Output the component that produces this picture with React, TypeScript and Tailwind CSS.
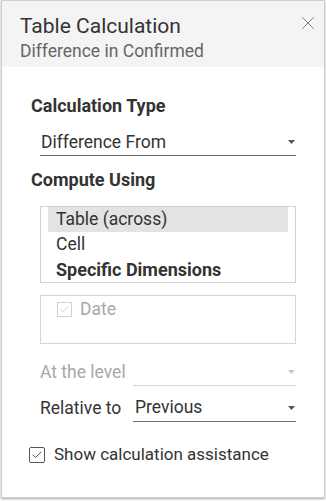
import { Check, X } from 'lucide-react';

function Caret({ light }: { light?: boolean }) {
  return (
    <svg width="7" height="4" viewBox="0 0 7 4" className={light ? 'fill-[#c8c8c8]' : 'fill-[#555]'}>
      <path d="M0 0h7L3.5 4z" />
    </svg>
  );
}

function Dropdown({ value, light, className }: { value: string; light?: boolean; className?: string }) {
  return (
    <div className={`flex items-center justify-between border-b ${light ? 'border-[#d6d6d6]' : 'border-[#6f6f6f]'} ${className ?? ''}`}>
      <span className="text-[#333]">{value}</span>
      <span className="pr-[1px]">
        <Caret light={light} />
      </span>
    </div>
  );
}

export default function App() {
  return (
    <div className="w-[326px] h-[501px] bg-white overflow-hidden" style={{ fontFamily: 'Roboto, "Liberation Sans", sans-serif' }}>
      <div className="h-[498px] mx-[1px] border border-[#cfcfcf] bg-white shadow-[0_1px_2px_rgba(0,0,0,0.35)] flex flex-col">
        {/* header */}
        <div className="h-[66px] bg-[#f4f4f4] flex justify-between pl-[18px] pr-[5px]">
          <div className="pt-[11px]">
            <h1 className="text-[21px] leading-[28px] text-[#333]">Table Calculation</h1>
            <p className="text-[17.5px] leading-[22px] text-[#666]">Difference in Confirmed</p>
          </div>
          <button className="h-fit pt-[11px] text-[#777]">
            <X size={22} strokeWidth={1} />
          </button>
        </div>

        <div className="pl-[29px] pr-[28px] pt-[28px] text-[17.5px] text-[#333]">
          <h2 className="text-[18px] font-bold leading-[22px]">Calculation Type</h2>
          <Dropdown value="Difference From" className="ml-[9px] mt-[12px] h-[27px] pl-[1px]" />

          <h2 className="text-[18px] font-bold leading-[22px] mt-[13px]">Compute Using</h2>

          <div className="ml-[9px] mt-[15px] h-[77px] border border-[#d0d0d0] px-[7px]">
            <div className="bg-[#e3e3e3] h-[25px] leading-[25px] pl-[8px]">Table (across)</div>
            <div className="h-[25px] leading-[25px] pl-[8px]">Cell</div>
            <div className="h-[25px] leading-[25px] pl-[8px] text-[18px] font-bold">Specific Dimensions</div>
          </div>

          <div className="ml-[9px] mt-[12px] h-[49px] border border-[#d6d6d6] pl-[16px] pt-[2px]">
            <label className="flex items-center gap-[8px] text-[#a8a8a8] leading-[22px]">
              <span className="w-[15px] h-[15px] border border-[#d0d0d0] flex items-center justify-center">
                <Check size={11} strokeWidth={1.5} className="text-[#c2c2c2]" />
              </span>
              Date
            </label>
          </div>

          <div className="ml-[9px] mt-[14px] flex items-center h-[28px]">
            <span className="w-[93px] text-[#a8a8a8]">At the level</span>
            <Dropdown value="" light className="flex-1 h-[28px]" />
          </div>
          <div className="ml-[9px] mt-[8px] flex items-center h-[28px]">
            <span className="w-[93px]">Relative to</span>
            <Dropdown value="Previous" className="flex-1 h-[28px] pl-[2px]" />
          </div>

          <label className="mt-[20px] -ml-[2px] flex items-center gap-[9px] text-[17px]">
            <span className="w-[16px] h-[16px] border border-[#555] rounded-[2px] flex items-center justify-center">
              <Check size={12} strokeWidth={1.6} className="text-[#333]" />
            </span>
            Show calculation assistance
          </label>
        </div>
      </div>
    </div>
  );
}
